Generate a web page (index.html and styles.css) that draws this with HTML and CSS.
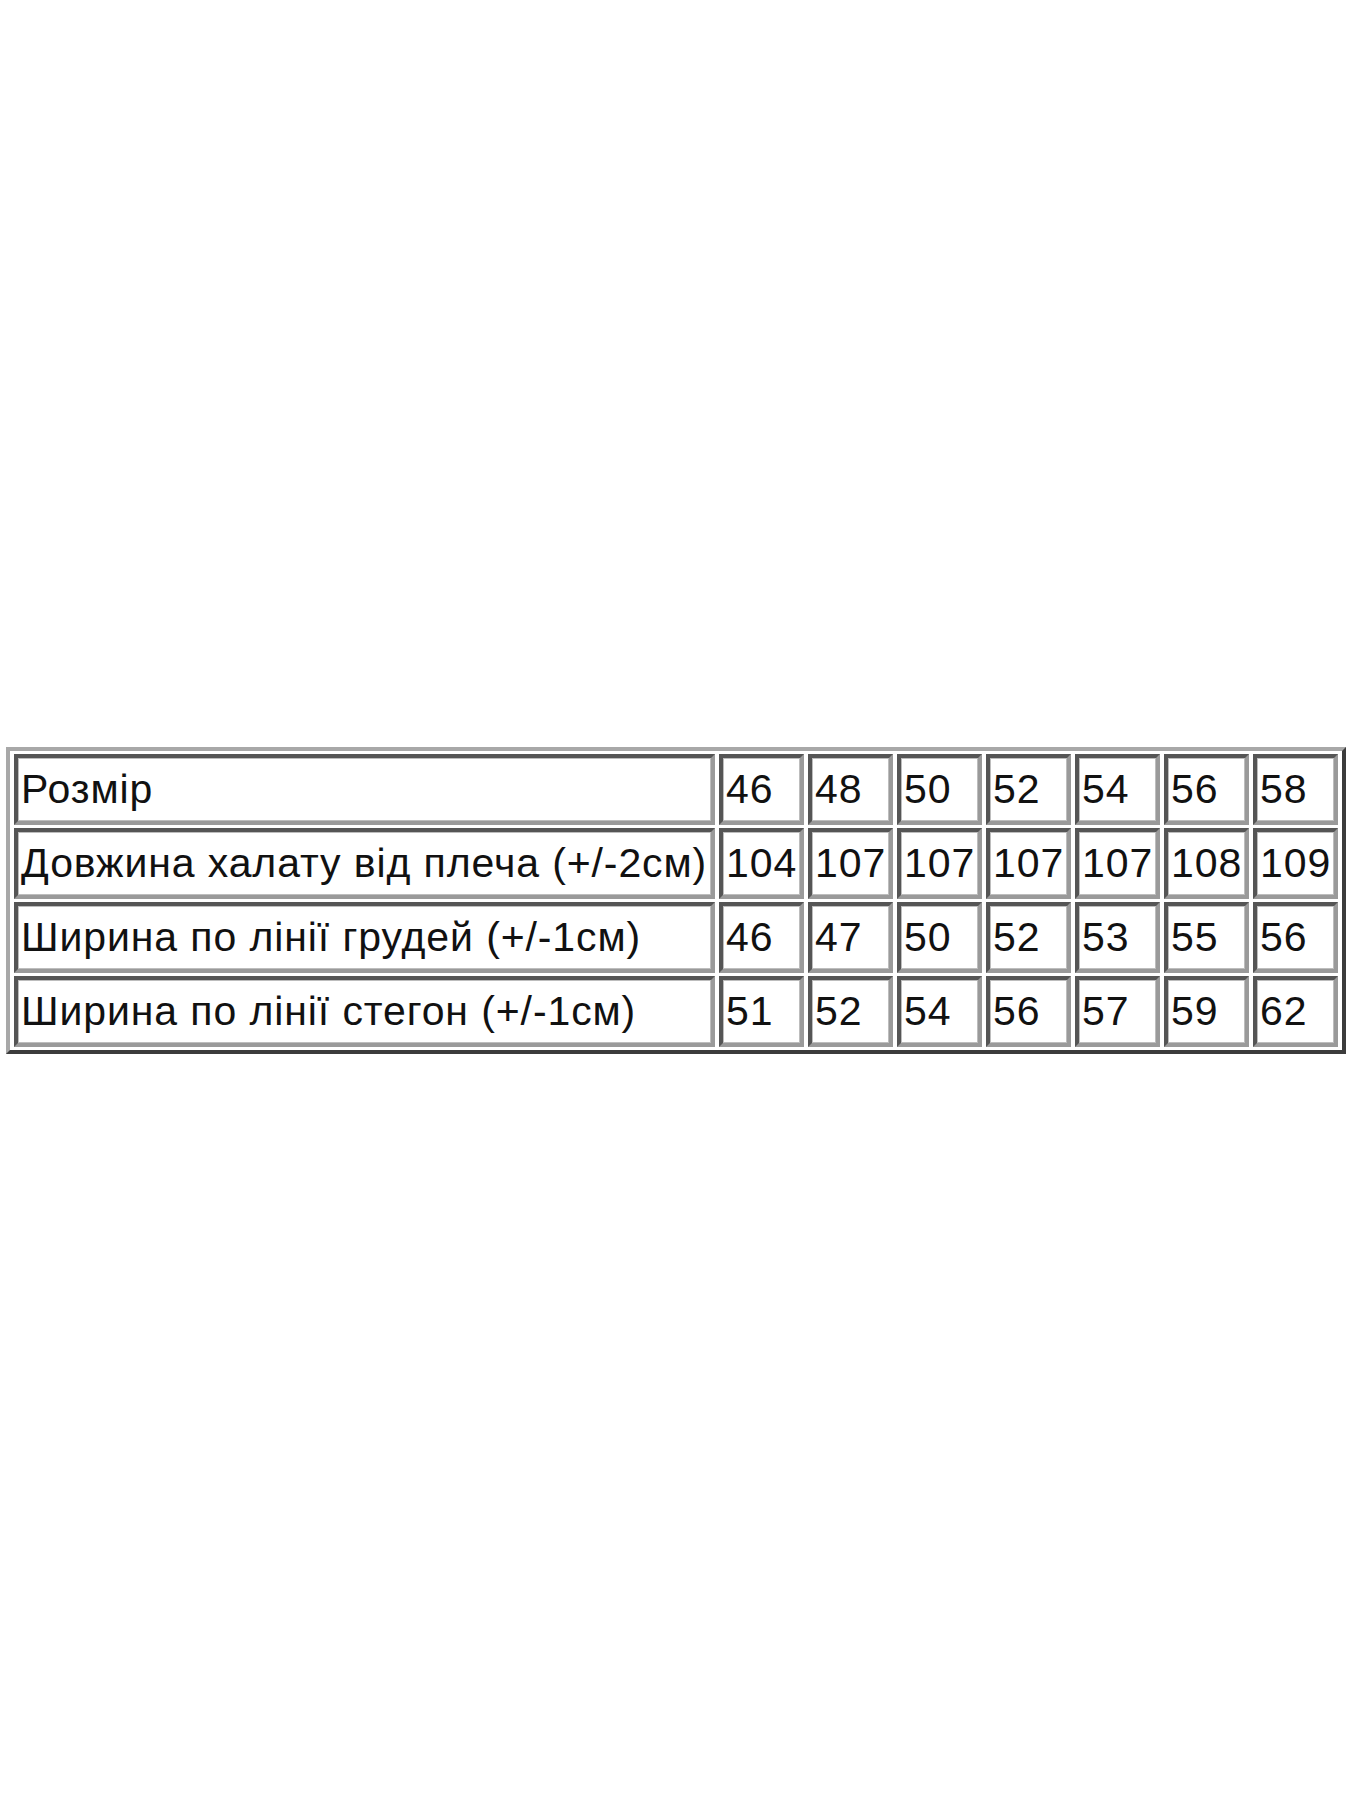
FILE: index.html
```html
<!DOCTYPE html>
<html lang="uk">
<head>
<meta charset="utf-8">
<title>Розмірна сітка</title>
<link rel="stylesheet" href="styles.css">
</head>
<body>
<main class="page">
  <table class="sizes">
    <colgroup>
      <col class="c-label">
      <col class="c-num"><col class="c-num"><col class="c-num"><col class="c-num"><col class="c-num"><col class="c-num"><col class="c-num">
    </colgroup>
    <tbody>
      <tr><td>Розмір</td><td>46</td><td>48</td><td>50</td><td>52</td><td>54</td><td>56</td><td>58</td></tr>
      <tr><td>Довжина халату від плеча (+/-2см)</td><td>104</td><td>107</td><td>107</td><td>107</td><td>107</td><td>108</td><td>109</td></tr>
      <tr><td>Ширина по лінії грудей (+/-1см)</td><td>46</td><td>47</td><td>50</td><td>52</td><td>53</td><td>55</td><td>56</td></tr>
      <tr><td>Ширина по лінії стегон (+/-1см)</td><td>51</td><td>52</td><td>54</td><td>56</td><td>57</td><td>59</td><td>62</td></tr>
    </tbody>
  </table>
</main>
</body>
</html>
```

FILE: styles.css
```css
html, body {
  margin: 0;
  padding: 0;
  background: #ffffff;
}

.page {
  height: 1800px;
  display: flex;
  align-items: center;
  justify-content: center;
  padding-left: 2px;
  box-sizing: border-box;
}

.sizes {
  table-layout: fixed;
  width: 1340px;
  border-collapse: separate;
  border-spacing: 4px 3px;
  border-width: 4px;
  border-style: solid;
  border-color: #a8a8a8 #3c3c3c #3c3c3c #a8a8a8;
  font-family: "Liberation Sans", Arial, sans-serif;
  font-size: 41px;
  letter-spacing: 0.9px;
  color: #111111;
}

.c-label { width: 701px; }
.c-num { width: 85px; }

.sizes td {
  height: 71px;
  box-sizing: border-box;
  padding: 0 1px 0 3px;
  vertical-align: middle;
  white-space: nowrap;
  overflow: visible;
  border-width: 4px;
  border-style: solid;
  border-color: #555555 #9a9a9a #9a9a9a #555555;
  box-shadow: inset 1px 1px 0 #bdbdbd, inset -1px -1px 0 #bdbdbd;
}
```
